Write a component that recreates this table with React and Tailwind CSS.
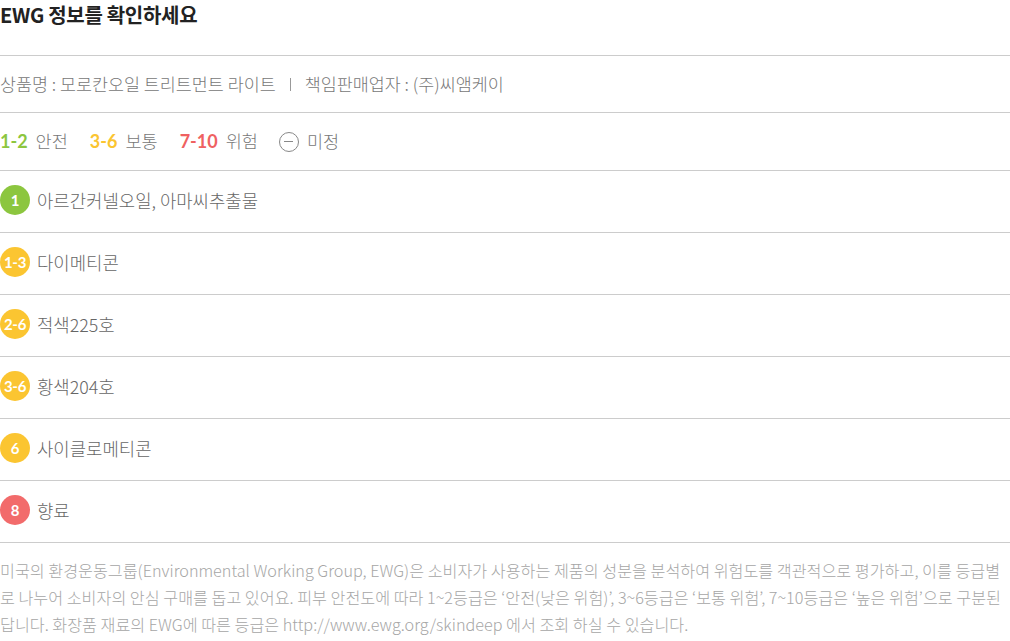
import React from 'react';

const ingredients = [
  { grade: '1', color: 'bg-[#8cc63f]', name: '아르간커넬오일, 아마씨추출물' },
  { grade: '1-3', color: 'bg-[#fbc531]', name: '다이메티콘' },
  { grade: '2-6', color: 'bg-[#fbc531]', name: '적색225호' },
  { grade: '3-6', color: 'bg-[#fbc531]', name: '황색204호' },
  { grade: '6', color: 'bg-[#fbc531]', name: '사이클로메티콘' },
  { grade: '8', color: 'bg-[#f26b6b]', name: '향료' },
];

const App = () => {
  return (
    <div className="w-[1010px] h-[641px] bg-white overflow-hidden font-['Noto_Sans_CJK_KR',sans-serif]">
      <div className="h-[56px] border-b border-[#cccccc]">
        <h1 className="text-[20px] leading-[29px] font-bold text-[#222] tracking-[-0.3px]">EWG 정보를 확인하세요</h1>
      </div>

      <div className="h-[57px] border-b border-[#cccccc] flex items-center text-[17.4px] font-light text-[#777]">
        <span>상품명 : 모로칸오일 트리트먼트 라이트</span>
        <span className="mx-[14px] w-px h-[13px] bg-[#999]"></span>
        <span>책임판매업자 : (주)씨앰케이</span>
      </div>

      <div className="h-[58px] border-b border-[#cccccc] flex items-center text-[17.5px] font-light text-[#777]">
        <span className="font-['Lato',sans-serif] font-bold text-[#8cc63f] text-[18px]">1-2</span>
        <span className="ml-[8px]">안전</span>
        <span className="ml-[22px] font-['Lato',sans-serif] font-bold text-[#fbc531] text-[18px]">3-6</span>
        <span className="ml-[8px]">보통</span>
        <span className="ml-[22px] font-['Lato',sans-serif] font-bold text-[#ef6161] text-[18px]">7-10</span>
        <span className="ml-[8px]">위험</span>
        <span className="ml-[21px] w-[20px] h-[20px] rounded-full border-[1.5px] border-[#888] flex items-center justify-center">
          <span className="w-[9px] h-[1.5px] bg-[#888]"></span>
        </span>
        <span className="ml-[8px]">미정</span>
      </div>

      {ingredients.map((item) => (
        <div key={item.name} className="h-[62px] border-b border-[#cccccc] flex items-center pb-[3px]">
          <span className={`w-[30px] h-[30px] rounded-full ${item.color} flex items-center justify-center text-white font-['Lato',sans-serif] font-bold text-[15px] tracking-[-0.3px]`}>
            {item.grade}
          </span>
          <span className="ml-[7px] text-[17.8px] font-light text-[#666]">{item.name}</span>
        </div>
      ))}

      <div className="pt-[14px] text-[16.2px] leading-[27px] font-light text-[#a6a6a6]">
        <p className="whitespace-nowrap">미국의 환경운동그룹(Environmental Working Group, EWG)은 소비자가 사용하는 제품의 성분을 분석하여 위험도를 객관적으로 평가하고, 이를 등급별</p>
        <p className="whitespace-nowrap">로 나누어 소비자의 안심 구매를 돕고 있어요. 피부 안전도에 따라 1~2등급은 ‘안전(낮은 위험)’, 3~6등급은 ‘보통 위험’, 7~10등급은 ‘높은 위험’으로 구분된</p>
        <p className="whitespace-nowrap">답니다. 화장품 재료의 EWG에 따른 등급은 http://www.ewg.org/skindeep 에서 조회 하실 수 있습니다.</p>
      </div>
    </div>
  );
};

export default App;
